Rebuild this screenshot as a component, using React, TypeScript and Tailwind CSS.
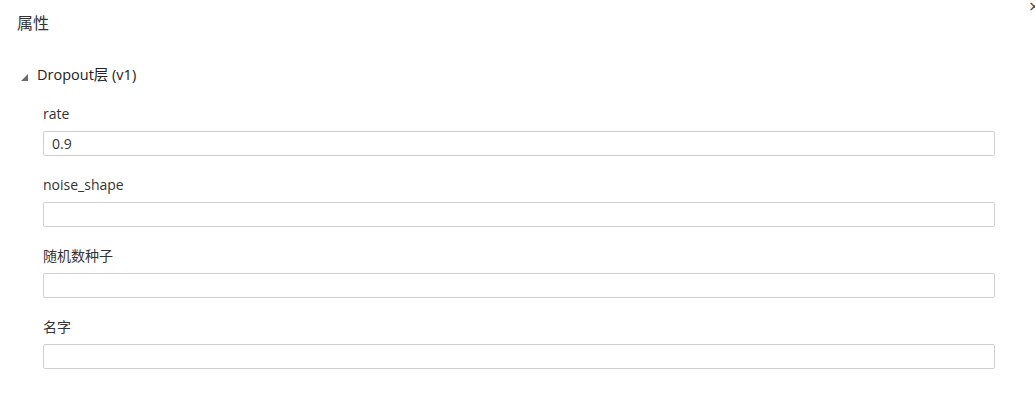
import React from 'react';

const fields = [
  { label: 'rate', value: '0.9' },
  { label: 'noise_shape', value: '' },
  { label: '随机数种子', value: '' },
  { label: '名字', value: '' },
];

export default function App() {
  return (
    <div
      className="relative w-[1035px] h-[401px] overflow-hidden bg-white text-[#333]"
      style={{ fontFamily: '"Open Sans", "Noto Sans", "Noto Sans CJK SC", sans-serif' }}
    >
      {/* close button, mostly off the right edge */}
      <span className="absolute left-[1029px] top-[-3px] text-[18px] leading-none text-[#444]">×</span>

      {/* Panel title */}
      <div className="pl-[17px] pt-[12px] text-[16px] leading-[22px]">属性</div>

      {/* Section */}
      <div className="mt-[31px]">
        <div className="flex items-center pl-[21px] h-[20px]">
          <svg width="7" height="7" viewBox="0 0 7 7" className="mt-[5px]">
            <polygon points="7,0 7,7 0,7" fill="#6b6b6b" />
          </svg>
          <span className="ml-[9px] text-[14.5px] leading-5 text-[#222]">Dropout层 (v1)</span>
        </div>

        <div className="pl-[43px] pr-[40px] pt-[19px] flex flex-col">
          {fields.map((f) => (
            <div key={f.label} className="flex flex-col mb-[19px]">
              <label className="text-[14px] leading-5 mb-[7px]">{f.label}</label>
              <input
                readOnly
                value={f.value}
                className="h-[25px] w-full border border-[#cfcfcf] rounded-[2px] px-[8px] text-[14px] text-[#333] outline-none"
                style={{ fontFamily: 'inherit' }}
              />
            </div>
          ))}
        </div>
      </div>
    </div>
  );
}
